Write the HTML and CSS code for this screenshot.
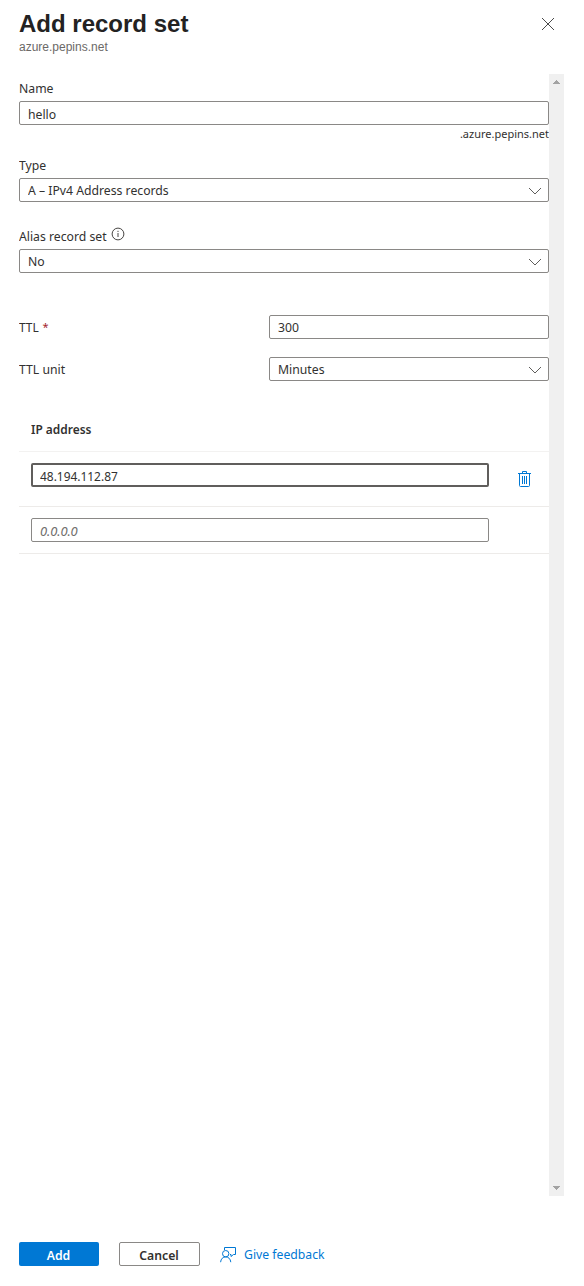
FILE: index.html
```html
<!DOCTYPE html>
<html lang="en">
<head>
<meta charset="utf-8">
<title>Add record set</title>
<link rel="stylesheet" href="styles.css">
</head>
<body>
<main class="panel">
  <header class="header">
    <div>
      <h1 class="title">Add record set</h1>
      <p class="subtitle">azure.pepins.net</p>
    </div>
    <svg class="close" width="14" height="14" viewBox="0 0 14 14"><path d="M1 1L13 13M13 1L1 13"/></svg>
  </header>
  <div class="viewport">
    <div class="content">
      <div class="label name-label"><span class="text">Name</span></div>
      <div class="field low"><span class="text">hello</span></div>
      <div class="suffix"><span>.azure.pepins.net</span></div>
      <div class="label type-label"><span class="text">Type</span></div>
      <div class="field select"><span class="text">A – IPv4 Address records</span><svg class="chevron" width="14" height="8" viewBox="0 0 14 8"><path d="M1 1L7 7L13 1"/></svg></div>
      <div class="label alias-label"><span class="text">Alias record set</span><svg class="info" width="14" height="14" viewBox="0 0 14 14"><circle cx="7" cy="7" r="5.900"/><path d="M7 6V10M7 3.800V5"/></svg></div>
      <div class="field select"><span class="text">No</span><svg class="chevron" width="14" height="8" viewBox="0 0 14 8"><path d="M1 1L7 7L13 1"/></svg></div>
      <div class="row ttl-row">
        <div class="label"><span class="text narrow">TTL</span><span class="required">*</span></div>
        <div class="field"><span class="text">300</span></div>
      </div>
      <div class="row unit-row">
        <div class="label"><span class="text">TTL unit</span></div>
        <div class="field select"><span class="text">Minutes</span><svg class="chevron" width="14" height="8" viewBox="0 0 14 8"><path d="M1 1L7 7L13 1"/></svg></div>
      </div>
      <div class="grid">
        <div class="grid-head"><span class="text narrow">IP address</span></div>
        <div class="grid-row filled">
          <div class="field focused low"><span class="text narrow">48.194.112.87</span></div>
          <svg class="trash" width="13" height="16" viewBox="0 0 13 16"><path d="M0 2.500H13M4.500 2V.500H8.500V2M1.500 3V14.500Q1.500 15.500 2.500 15.500H10.500Q11.500 15.500 11.500 14.500V3M4.500 5V13M6.500 5V13M8.500 5V13"/></svg>
        </div>
        <div class="grid-row empty">
          <div class="field low"><span class="placeholder">0.0.0.0</span></div>
        </div>
      </div>
    </div>
    <div class="scrollbar">
      <svg width="7" height="4" viewBox="0 0 7 4"><path d="M0 4V3H1V2H2V1H3V0H4V1H5V2H6V3H7V4Z"/></svg>
      <svg width="7" height="4" viewBox="0 0 7 4"><path d="M0 0V1H1V2H2V3H3V4H4V3H5V2H6V1H7V0Z"/></svg>
    </div>
  </div>
  <footer class="footer">
    <div class="button primary"><span class="text centered">Add</span></div>
    <div class="button secondary"><span class="text centered">Cancel</span></div>
    <div class="feedback">
      <svg width="17" height="17" viewBox="0 0 17 17"><path d="M4.500 4V1.500H15.500V8.500H13.500L11 10.500V8.500H10M.600 16.200C.800 12.800 3 10.900 5.700 10.900S10.500 12.800 10.800 16.200"/><circle cx="5.700" cy="7.700" r="3.200"/></svg>
      <span class="text">Give feedback</span>
    </div>
  </footer>
</main>
</body>
</html>
```
FILE: styles.css
```css
* { box-sizing: border-box; }
body {
  margin: 0;
  background: #fff;
  color: #323130;
  font: 13px/18px "Noto Sans", "Open Sans", sans-serif;
}
span { white-space: nowrap; }
svg { display: block; flex: none; fill: none; }
.panel { width: 584px; height: 1286px; display: flex; flex-direction: column; }
.header { height: 74px; flex: none; padding: 9px 29px 0 19px; display: flex; justify-content: space-between; font-family: "Liberation Sans", Arial, sans-serif; }
.title { margin: 0; font-size: 24px; line-height: 30px; font-weight: 700; color: #232222; }
.subtitle { margin: 0; font-size: 12px; line-height: 16px; color: #6b6967; }
.close { margin-top: 8px; stroke: #4a4a4a; }
.viewport { height: 1122px; flex: none; display: flex; padding-left: 19px; }
.content { width: 530px; }
.scrollbar { width: 15px; background: #f0f0f0; display: flex; flex-direction: column; justify-content: space-between; align-items: center; padding: 6px 0; }
.scrollbar svg { fill: #a3a3a3; }
.label { display: flex; align-items: center; height: 18px; }
.field { height: 24px; border: 1px solid #8a8886; border-radius: 2px; display: flex; align-items: center; padding: 0 6px 0 8px; }
.select { justify-content: space-between; padding-bottom: 1px; }
.low { padding-top: 2px; }
.chevron { stroke: #605e5c; margin-top: 2px; }
.name-label { margin: 5px 0 4px; }
.suffix { height: 18px; display: flex; justify-content: flex-end; font-size: 11px; }
.type-label { margin: 13px 0 4px; }
.alias-label { margin: 25px 0 4px; }
.info { margin-top: -5px; margin-left: -1px; stroke: #484644; }
.row { display: grid; grid-template-columns: 250px 280px; align-items: center; }
.ttl-row { margin-top: 42px; }
.unit-row { margin-top: 18px; }
.required { color: #a4262c; margin-left: 2px; font-size: 11px; }
.grid { margin-top: 27px; }
.grid-head { height: 44px; padding: 12px 12px 0; font-weight: 600; border-bottom: 1px solid #f3f2f1; }
.grid-row { display: flex; padding: 11px 18px 0 12px; border-bottom: 1px solid #edebe9; justify-content: space-between; }
.grid-row .field { width: 458px; }
.filled { height: 55px; }
.empty { height: 47px; }
.focused { border: 2px solid #605e5c; padding-left: 7px; }
.trash { stroke: #0078d4; margin-top: 8px; }
.placeholder { font-style: italic; color: #706e6c; letter-spacing: -0.15px; }
.footer { display: flex; padding: 46px 0 0 19px; }
.button { height: 24px; border-radius: 2px; display: flex; align-items: center; justify-content: center; font-weight: 600; padding-top: 2px; }
.primary { width: 80px; background: #0078d4; color: #fff; }
.secondary { width: 81px; margin-left: 20px; border: 1px solid #8a8886; }
.feedback { margin-left: 20px; height: 24px; display: flex; gap: 7px; align-items: center; color: #0078d4; }
.feedback svg { stroke: #0078d4; margin-top: 1px; }

/* Condensed form text */
.text { display: inline-block; transform: scaleX(0.94); transform-origin: left center; }
.narrow { transform: scaleX(0.917); }
.centered { transform-origin: center; }
```
